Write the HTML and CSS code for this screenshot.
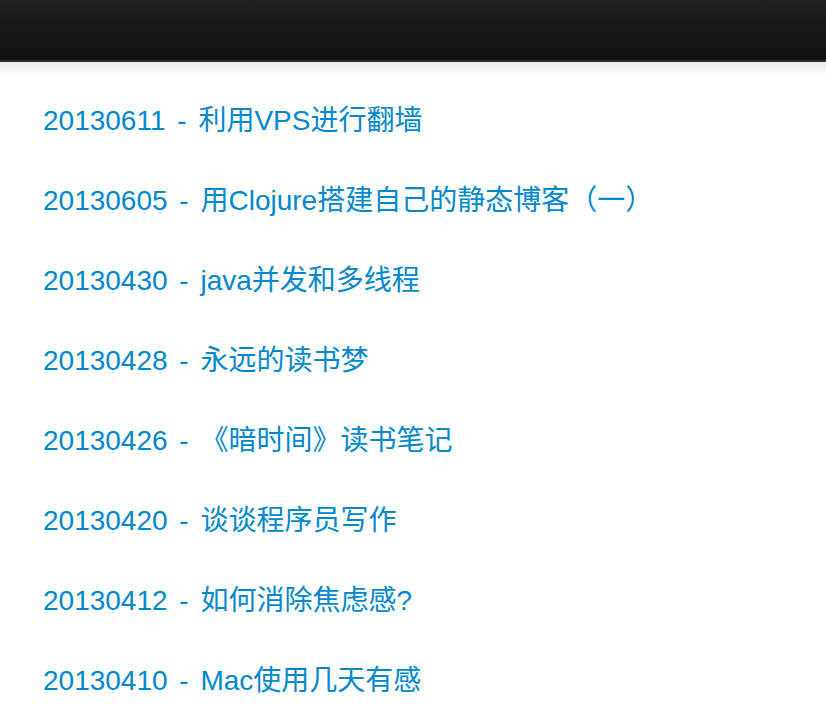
FILE: index.html
```html
<!DOCTYPE html>
<html lang="zh-CN">
<head>
<meta charset="utf-8">
<title>Blog</title>
<link rel="stylesheet" href="styles.css">
</head>
<body>
<div class="navbar"></div>
<div class="shadow"></div>
<ul class="posts">
  <li><a href="#">20130611 - 利用VPS进行翻墙</a></li>
  <li><a href="#">20130605 - 用Clojure搭建自己的静态博客（一）</a></li>
  <li><a href="#">20130430 - java并发和多线程</a></li>
  <li><a href="#">20130428 - 永远的读书梦</a></li>
  <li><a href="#">20130426 - 《暗时间》读书笔记</a></li>
  <li><a href="#">20130420 - 谈谈程序员写作</a></li>
  <li><a href="#">20130412 - 如何消除焦虑感?</a></li>
  <li><a href="#">20130410 - Mac使用几天有感</a></li>
</ul>
</body>
</html>
```
FILE: styles.css
```css
html, body {
  margin: 0;
  padding: 0;
  background: #ffffff;
  overflow: hidden;
}
body {
  font-family: "Liberation Sans", Arial, "Noto Sans CJK SC", sans-serif;
}
.navbar {
  height: 60px;
  background: linear-gradient(to bottom, #1f1f1f, #111111);
  border-bottom: 2px solid #2c2c2c;
}
.shadow {
  height: 14px;
  background: linear-gradient(to bottom, #ececec, #ffffff);
}
.posts {
  list-style: none;
  margin: 0;
  padding: 5px 0 0 43px;
}
.posts li {
  height: 80px;
  line-height: 80px;
  font-size: 28px;
  white-space: nowrap;
  word-spacing: 4px;
}
.posts a {
  color: #0088cc;
  text-decoration: none;
}
```
